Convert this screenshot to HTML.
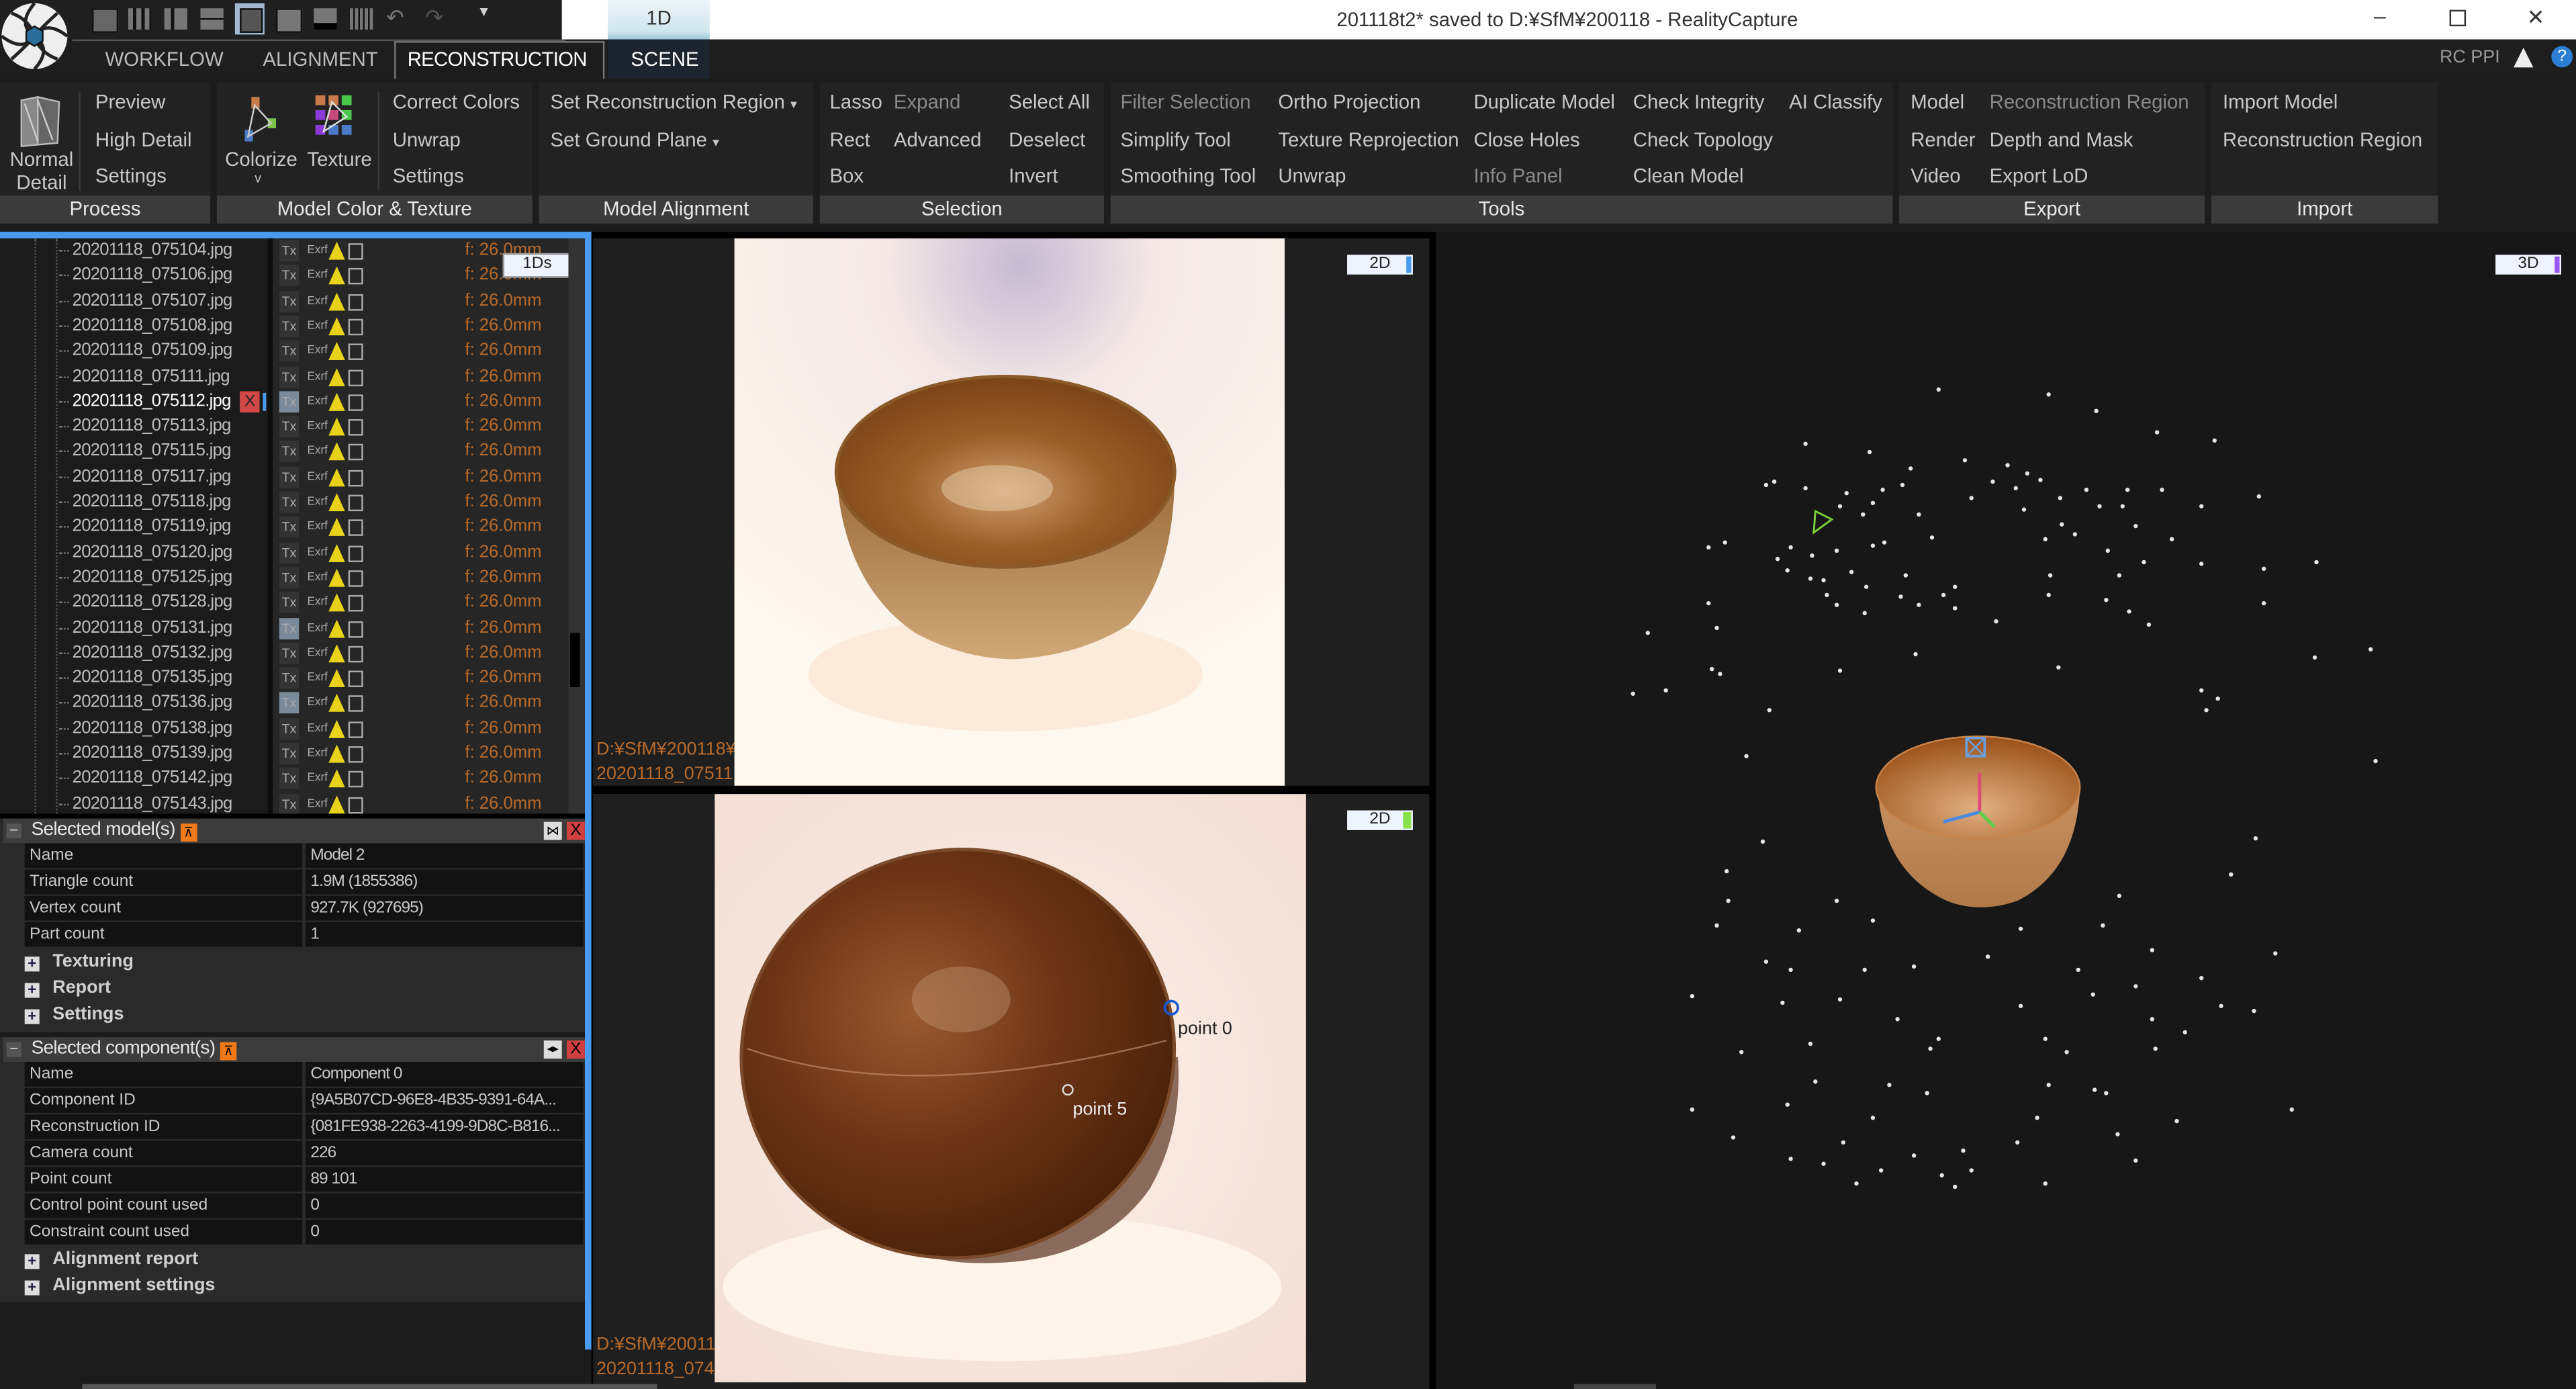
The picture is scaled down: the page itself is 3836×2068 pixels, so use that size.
<!DOCTYPE html>
<html><head><meta charset="utf-8">
<style>
html,body{margin:0;padding:0;background:#161616;overflow:hidden;width:3836px;height:2068px}
#s{position:absolute;left:0;top:0;width:1568px;height:845px;transform:scale(2.44643,2.44734);transform-origin:0 0;background:#1a1a1a;font-family:"Liberation Sans Narrow","Liberation Sans",sans-serif;font-size:12px;color:#c8c8c8}
.a{position:absolute;white-space:nowrap}
.g{position:absolute;top:50px;height:86px;background:#222}
.gl{position:absolute;left:0;right:0;bottom:0;height:17px;background:#3b3b3b;color:#e8e8e8;text-align:center;line-height:17px;font-size:12px}
.rb{position:absolute;font-size:12px;color:#c8c8c8;white-space:nowrap}
.dim{color:#8a8a8a}
.row{position:absolute;left:0;width:345px;height:15px;font-size:10.5px;line-height:15px;letter-spacing:-0.3px}
.row .n{position:absolute;left:44px;color:#bdbdbd}
.row .d{position:absolute;left:36px;top:7px;width:6px;border-top:1px dotted #777}
.row .tx{position:absolute;left:170px;top:1px;width:12px;height:13px;background:#333;color:#aaa;font-size:8px;line-height:13px;text-align:center;letter-spacing:0}
.row .ex{position:absolute;left:187px;color:#aaa;font-size:7px;letter-spacing:0}
.row .wr{position:absolute;left:200px;top:2px;width:0;height:0;border-left:5px solid transparent;border-right:5px solid transparent;border-bottom:11px solid #e8d21a}
.row .lb{position:absolute;left:212px;top:3px;width:7px;height:8px;border:1px solid #aaa}
.row .f{position:absolute;left:283px;color:#b86a2a;letter-spacing:0}
.pr{position:absolute;left:15px;width:340px;height:15px;font-size:10px;line-height:15px}
.pr .k{position:absolute;left:0;width:169px;height:15px;background:#121212;padding-left:3px;box-sizing:border-box;color:#c8c8c8}
.pr .v{position:absolute;left:171px;width:169px;height:15px;background:#121212;padding-left:3px;box-sizing:border-box;color:#c8c8c8;overflow:hidden;letter-spacing:-0.4px}
.ex2{position:absolute;left:15px;font-size:11px;font-weight:bold;color:#d0d0d0}
.ex2 i{display:inline-block;width:9px;height:9px;background:#ddd;color:#224;font-style:normal;font-size:9px;line-height:9px;text-align:center;margin-right:8px;vertical-align:-1px}
.hd{position:absolute;left:2px;width:354px;height:15px;background:#3c3c3c;font-size:12px;line-height:15px;color:#e6e6e6}
.pin{display:inline-block;width:10px;height:11px;background:#f07a1a;color:#000;font-size:8px;text-align:center;line-height:11px;vertical-align:-1px;margin-left:3px}
.tag{position:absolute;width:40px;height:12px;background:#eef4ff;color:#222;font-size:10px;line-height:12px;text-align:center;font-family:"Liberation Sans",sans-serif}
</style></head><body><div id="s">

<!-- title bar -->
<div class="a" style="left:0;top:0;width:342px;height:24px;background:#1f1f1f"></div>
<div class="a" style="left:342px;top:0;width:1226px;height:24px;background:#fff"></div>
<div class="a" style="left:370px;top:0;width:62px;height:24px;background:linear-gradient(#eef5f8,#cfe6ee 80%,#9cc9d6);color:#333;text-align:center;line-height:22px;font-size:12px">1D</div>
<div class="a" style="left:0;top:0;width:1568px;line-height:24px;text-align:center;color:#333;font-size:12px;padding-left:340px;box-sizing:border-box;font-family:'Liberation Sans',sans-serif">201118t2* saved to D:¥SfM¥200118 - RealityCapture</div>
<div class="a" style="left:1445px;top:2px;color:#333;font-size:13px">–</div>
<div class="a" style="left:1491px;top:6px;width:8px;height:8px;border:1px solid #333"></div>
<div class="a" style="left:1538px;top:3px;color:#333;font-size:13px">✕</div>
<div class="a" style="left:56px;top:5px;width:14px;height:13px;background:#666;border:1px solid #111"></div>
<div class="a" style="left:78px;top:5px;width:14px;height:13px;background:repeating-linear-gradient(90deg,#777 0 3px,#111 3px 5px)"></div>
<div class="a" style="left:100px;top:5px;width:14px;height:13px;background:linear-gradient(90deg,#777 0 4px,#111 4px 6px,#777 6px)"></div>
<div class="a" style="left:122px;top:5px;width:14px;height:13px;background:linear-gradient(#777 0 6px,#111 6px 7px,#777 7px)"></div>
<div class="a" style="left:143px;top:2px;width:18px;height:19px;background:#9fb8d0"></div>
<div class="a" style="left:146px;top:5px;width:12px;height:13px;background:#555;border:1px solid #111"></div>
<div class="a" style="left:168px;top:5px;width:14px;height:13px;background:#777;border:1px solid #111"></div>
<div class="a" style="left:191px;top:5px;width:14px;height:13px;background:#777;border-bottom:4px solid #000;box-sizing:border-box"></div>
<div class="a" style="left:213px;top:5px;width:14px;height:13px;background:repeating-linear-gradient(90deg,#777 0 2px,#111 2px 3px)"></div>
<div class="a" style="left:235px;top:3px;color:#777;font-size:13px">↶</div>
<div class="a" style="left:259px;top:3px;color:#555;font-size:13px">↷</div>
<div class="a" style="left:292px;top:2px;color:#ccc;font-size:10px">▾</div>
<svg class="a" style="left:0;top:0" width="44" height="46" viewBox="0 0 44 46">
<circle cx="21" cy="22" r="20" fill="#eee"/>
<path d="M21 2 Q10 15 21 22 M41 22 Q28 12 21 22 M21 42 Q32 30 21 22 M1 22 Q14 32 21 22 M7 8 Q18 12 21 22 M35 8 Q26 16 21 22 M35 36 Q24 32 21 22 M7 36 Q16 28 21 22" stroke="#222" stroke-width="2" fill="none"/>
<path d="M16 19 L21 16 L26 19 L26 25 L21 28 L16 25 Z" fill="#2a6f9a" stroke="#111"/>
</svg>

<!-- tabs row -->
<div class="a" style="left:0;top:24px;width:1568px;height:24px;background:#1e1e1e"></div>
<div class="a" style="left:44px;top:24px;width:300px;height:1px;background:#555"></div>
<div class="a" style="left:0;top:0;width:44px;height:46px;overflow:hidden"></div>
<svg class="a" style="left:0;top:0" width="44" height="46" viewBox="0 0 44 46">
<circle cx="21" cy="22" r="20" fill="#eee"/>
<path d="M21 2 Q10 15 21 22 M41 22 Q28 12 21 22 M21 42 Q32 30 21 22 M1 22 Q14 32 21 22 M7 8 Q18 12 21 22 M35 8 Q26 16 21 22 M35 36 Q24 32 21 22 M7 36 Q16 28 21 22" stroke="#222" stroke-width="2" fill="none"/>
<path d="M16 19 L21 16 L26 19 L26 25 L21 28 L16 25 Z" fill="#2a6f9a" stroke="#111"/>
</svg>
<div class="a" style="left:64px;top:29px;color:#bbb;font-size:12px">WORKFLOW</div>
<div class="a" style="left:160px;top:29px;color:#bbb;font-size:12px">ALIGNMENT</div>
<div class="a" style="left:240px;top:25px;width:128px;height:23px;border:1px solid #777;border-bottom:none;box-sizing:border-box;background:#1c1c1c"></div>
<div class="a" style="left:248px;top:29px;color:#fff;font-size:12px;letter-spacing:-0.3px">RECONSTRUCTION</div>
<div class="a" style="left:370px;top:24px;width:62px;height:24px;background:#1c2430"></div>
<div class="a" style="left:384px;top:29px;color:#fff;font-size:12px">SCENE</div>
<div class="a" style="left:1485px;top:29px;color:#999;font-size:11px">RC PPI</div>
<div class="a" style="left:1530px;top:29px;width:0;height:0;border-left:6px solid transparent;border-right:6px solid transparent;border-bottom:12px solid #eee"></div>
<div class="a" style="left:1553px;top:28px;width:13px;height:13px;border-radius:50%;background:#2d7fd6;color:#fff;font-size:10px;text-align:center;line-height:13px">?</div>

<!-- ribbon -->
<div class="a" style="left:0;top:48px;width:1568px;height:93px;background:#1c1c1c"></div>
<div class="g" style="left:0;width:128px"><div class="gl">Process</div></div>
<div class="g" style="left:132px;width:192px"><div class="gl">Model Color &amp; Texture</div></div>
<div class="g" style="left:328px;width:167px"><div class="gl">Model Alignment</div></div>
<div class="g" style="left:499px;width:173px"><div class="gl">Selection</div></div>
<div class="g" style="left:676px;width:476px"><div class="gl">Tools</div></div>
<div class="g" style="left:1156px;width:186px"><div class="gl">Export</div></div>
<div class="g" style="left:1346px;width:138px"><div class="gl">Import</div></div>

<svg class="a" style="left:10px;top:56px" width="30" height="36"><path d="M3 5 L13 3 L13 32 L3 33 Z" fill="#888" stroke="#bbb"/><path d="M13 3 L26 6 L25 31 L13 32 Z" fill="#666" stroke="#bbb"/><path d="M5 7 L13 30 M13 5 L22 29" stroke="#ccc"/></svg>
<div class="rb" style="left:6px;top:90px;text-align:center;line-height:14px">Normal<br>Detail</div>
<div class="a" style="left:48px;top:56px;width:1px;height:60px;background:#3a3a3a"></div>
<div class="rb" style="left:58px;top:55px">Preview</div>
<div class="rb" style="left:58px;top:78px">High Detail</div>
<div class="rb" style="left:58px;top:100px">Settings</div>
<svg class="a" style="left:144px;top:56px" width="30" height="32"><rect x="9" y="3" width="5" height="7" fill="#c87a4a"/><rect x="19" y="16" width="5" height="6" fill="#7dc24a"/><rect x="5" y="23" width="5" height="7" fill="#4a7ac8"/><path d="M11 8 L21 19 L7 27 Z" fill="none" stroke="#ccc"/></svg>
<div class="rb" style="left:137px;top:90px">Colorize</div>
<div class="rb" style="left:155px;top:104px;font-size:8px">v</div>
<svg class="a" style="left:190px;top:56px" width="30" height="32"><rect x="2" y="2" width="6" height="6" fill="#c87a4a"/><rect x="10" y="2" width="6" height="6" fill="#c87a4a"/><rect x="18" y="2" width="6" height="6" fill="#4ac84a"/><rect x="2" y="11" width="6" height="6" fill="#8a3ad8"/><rect x="10" y="11" width="6" height="6" fill="#c84a7a"/><rect x="18" y="11" width="6" height="6" fill="#4ac84a"/><rect x="2" y="20" width="6" height="6" fill="#8a3ad8"/><rect x="10" y="20" width="6" height="6" fill="#4a7ac8"/><rect x="18" y="20" width="6" height="6" fill="#4a7ac8"/><path d="M12 6 L21 15 L7 24 Z" fill="none" stroke="#ddd"/></svg>
<div class="rb" style="left:187px;top:90px">Texture</div>
<div class="a" style="left:230px;top:56px;width:1px;height:60px;background:#3a3a3a"></div>
<div class="rb" style="left:239px;top:55px">Correct Colors</div>
<div class="rb" style="left:239px;top:78px">Unwrap</div>
<div class="rb" style="left:239px;top:100px">Settings</div>
<div class="rb" style="left:335px;top:55px">Set Reconstruction Region <span style="font-size:8px">▾</span></div>
<div class="rb" style="left:335px;top:78px">Set Ground Plane <span style="font-size:8px">▾</span></div>
<div class="rb" style="left:505px;top:55px">Lasso</div><div class="rb dim" style="left:544px;top:55px">Expand</div><div class="rb" style="left:614px;top:55px">Select All</div>
<div class="rb" style="left:505px;top:78px">Rect</div><div class="rb" style="left:544px;top:78px">Advanced</div><div class="rb" style="left:614px;top:78px">Deselect</div>
<div class="rb" style="left:505px;top:100px">Box</div><div class="rb" style="left:614px;top:100px">Invert</div>
<div class="rb dim" style="left:682px;top:55px">Filter Selection</div><div class="rb" style="left:778px;top:55px">Ortho Projection</div><div class="rb" style="left:897px;top:55px">Duplicate Model</div><div class="rb" style="left:994px;top:55px">Check Integrity</div><div class="rb" style="left:1089px;top:55px">AI Classify</div>
<div class="rb" style="left:682px;top:78px">Simplify Tool</div><div class="rb" style="left:778px;top:78px">Texture Reprojection</div><div class="rb" style="left:897px;top:78px">Close Holes</div><div class="rb" style="left:994px;top:78px">Check Topology</div>
<div class="rb" style="left:682px;top:100px">Smoothing Tool</div><div class="rb" style="left:778px;top:100px">Unwrap</div><div class="rb dim" style="left:897px;top:100px">Info Panel</div><div class="rb" style="left:994px;top:100px">Clean Model</div>
<div class="rb" style="left:1163px;top:55px">Model</div><div class="rb dim" style="left:1211px;top:55px">Reconstruction Region</div>
<div class="rb" style="left:1163px;top:78px">Render</div><div class="rb" style="left:1211px;top:78px">Depth and Mask</div>
<div class="rb" style="left:1163px;top:100px">Video</div><div class="rb" style="left:1211px;top:100px">Export LoD</div>
<div class="rb" style="left:1353px;top:55px">Import Model</div>
<div class="rb" style="left:1353px;top:78px">Reconstruction Region</div>

<!-- left panel -->
<div class="a" style="left:0;top:141px;width:360px;height:704px;background:#1b1b1b"></div>
<div class="a" style="left:0;top:141px;width:360px;height:4px;background:#4a9af0"></div>
<div class="a" style="left:356px;top:141px;width:4px;height:680px;background:#4a9af0"></div>
<div class="a" style="left:166px;top:145px;width:180px;height:350px;background:#262626"></div>
<div class="a" style="left:21px;top:145px;width:0;height:350px;border-left:1px dotted #555"></div>
<div class="a" style="left:34px;top:145px;width:0;height:350px;border-left:1px dotted #555"></div>
<div class="a" style="left:0;top:495px;width:356px;height:3px;background:#000"></div>

<div class="a" style="left:0;top:145px;width:346px;height:350px;overflow:hidden">
<div class="row" style="top:0px"><span class="d"></span><span class="n">20201118_075104.jpg</span><span class="tx">Tx</span><span class="ex">Exrf</span><span class="wr"></span><span class="lb"></span><span class="f">f: 26.0mm</span></div>
<div class="row" style="top:15.3px"><span class="d"></span><span class="n">20201118_075106.jpg</span><span class="tx">Tx</span><span class="ex">Exrf</span><span class="wr"></span><span class="lb"></span><span class="f">f: 26.0mm</span></div>
<div class="row" style="top:30.6px"><span class="d"></span><span class="n">20201118_075107.jpg</span><span class="tx">Tx</span><span class="ex">Exrf</span><span class="wr"></span><span class="lb"></span><span class="f">f: 26.0mm</span></div>
<div class="row" style="top:45.9px"><span class="d"></span><span class="n">20201118_075108.jpg</span><span class="tx">Tx</span><span class="ex">Exrf</span><span class="wr"></span><span class="lb"></span><span class="f">f: 26.0mm</span></div>
<div class="row" style="top:61.2px"><span class="d"></span><span class="n">20201118_075109.jpg</span><span class="tx">Tx</span><span class="ex">Exrf</span><span class="wr"></span><span class="lb"></span><span class="f">f: 26.0mm</span></div>
<div class="row" style="top:76.5px"><span class="d"></span><span class="n">20201118_075111.jpg</span><span class="tx">Tx</span><span class="ex">Exrf</span><span class="wr"></span><span class="lb"></span><span class="f">f: 26.0mm</span></div>
<div class="row" style="top:91.8px"><span class="d"></span><span class="n" style="color:#fff;width:102px;overflow:hidden">20201118_075112.jpg</span><span style="position:absolute;left:146px;top:1px;width:12px;height:13px;background:#d04848;color:#222;font-size:10px;text-align:center;line-height:13px">X</span><span style="position:absolute;left:160px;top:2px;width:2px;height:11px;background:#4a9af0"></span><span class="tx" style="background:#7a8a9a">Tx</span><span class="ex">Exrf</span><span class="wr"></span><span class="lb"></span><span class="f">f: 26.0mm</span></div>
<div class="row" style="top:107.1px"><span class="d"></span><span class="n">20201118_075113.jpg</span><span class="tx">Tx</span><span class="ex">Exrf</span><span class="wr"></span><span class="lb"></span><span class="f">f: 26.0mm</span></div>
<div class="row" style="top:122.4px"><span class="d"></span><span class="n">20201118_075115.jpg</span><span class="tx">Tx</span><span class="ex">Exrf</span><span class="wr"></span><span class="lb"></span><span class="f">f: 26.0mm</span></div>
<div class="row" style="top:137.7px"><span class="d"></span><span class="n">20201118_075117.jpg</span><span class="tx">Tx</span><span class="ex">Exrf</span><span class="wr"></span><span class="lb"></span><span class="f">f: 26.0mm</span></div>
<div class="row" style="top:153px"><span class="d"></span><span class="n">20201118_075118.jpg</span><span class="tx">Tx</span><span class="ex">Exrf</span><span class="wr"></span><span class="lb"></span><span class="f">f: 26.0mm</span></div>
<div class="row" style="top:168.3px"><span class="d"></span><span class="n">20201118_075119.jpg</span><span class="tx">Tx</span><span class="ex">Exrf</span><span class="wr"></span><span class="lb"></span><span class="f">f: 26.0mm</span></div>
<div class="row" style="top:183.6px"><span class="d"></span><span class="n">20201118_075120.jpg</span><span class="tx">Tx</span><span class="ex">Exrf</span><span class="wr"></span><span class="lb"></span><span class="f">f: 26.0mm</span></div>
<div class="row" style="top:198.9px"><span class="d"></span><span class="n">20201118_075125.jpg</span><span class="tx">Tx</span><span class="ex">Exrf</span><span class="wr"></span><span class="lb"></span><span class="f">f: 26.0mm</span></div>
<div class="row" style="top:214.2px"><span class="d"></span><span class="n">20201118_075128.jpg</span><span class="tx">Tx</span><span class="ex">Exrf</span><span class="wr"></span><span class="lb"></span><span class="f">f: 26.0mm</span></div>
<div class="row" style="top:229.5px"><span class="d"></span><span class="n">20201118_075131.jpg</span><span class="tx" style="background:#7a8a9a">Tx</span><span class="ex">Exrf</span><span class="wr"></span><span class="lb"></span><span class="f">f: 26.0mm</span></div>
<div class="row" style="top:244.8px"><span class="d"></span><span class="n">20201118_075132.jpg</span><span class="tx">Tx</span><span class="ex">Exrf</span><span class="wr"></span><span class="lb"></span><span class="f">f: 26.0mm</span></div>
<div class="row" style="top:260.1px"><span class="d"></span><span class="n">20201118_075135.jpg</span><span class="tx">Tx</span><span class="ex">Exrf</span><span class="wr"></span><span class="lb"></span><span class="f">f: 26.0mm</span></div>
<div class="row" style="top:275.4px"><span class="d"></span><span class="n">20201118_075136.jpg</span><span class="tx" style="background:#7a8a9a">Tx</span><span class="ex">Exrf</span><span class="wr"></span><span class="lb"></span><span class="f">f: 26.0mm</span></div>
<div class="row" style="top:290.7px"><span class="d"></span><span class="n">20201118_075138.jpg</span><span class="tx">Tx</span><span class="ex">Exrf</span><span class="wr"></span><span class="lb"></span><span class="f">f: 26.0mm</span></div>
<div class="row" style="top:306px"><span class="d"></span><span class="n">20201118_075139.jpg</span><span class="tx">Tx</span><span class="ex">Exrf</span><span class="wr"></span><span class="lb"></span><span class="f">f: 26.0mm</span></div>
<div class="row" style="top:321.3px"><span class="d"></span><span class="n">20201118_075142.jpg</span><span class="tx">Tx</span><span class="ex">Exrf</span><span class="wr"></span><span class="lb"></span><span class="f">f: 26.0mm</span></div>
<div class="row" style="top:336.6px"><span class="d"></span><span class="n">20201118_075143.jpg</span><span class="tx">Tx</span><span class="ex">Exrf</span><span class="wr"></span><span class="lb"></span><span class="f">f: 26.0mm</span></div>
</div>
<div class="tag" style="left:306px;top:154px;height:13px;border:1px solid #999">1Ds</div>
<div class="a" style="left:346px;top:145px;width:10px;height:350px;background:#333"></div>
<div class="a" style="left:347px;top:385px;width:6px;height:33px;background:#000"></div>
<div class="a" style="left:163px;top:145px;width:3px;height:350px;background:#0d0d0d"></div>

<!-- props -->
<div class="a" style="left:0;top:498px;width:356px;height:323px;background:#2a2a2a"></div>
<div class="hd" style="top:498px"><span style="position:absolute;left:2px;top:3px;width:9px;height:9px;background:#555;color:#ddd;font-size:9px;line-height:8px;text-align:center">−</span><span style="position:absolute;left:17px;font-size:11.5px;letter-spacing:-0.3px">Selected model(s)<span class="pin">⊼</span></span><span style="position:absolute;left:329px;top:2px;width:11px;height:11px;background:#ddd;color:#000;font-size:8px;text-align:center;line-height:11px">⋈</span><span style="position:absolute;left:343px;top:2px;width:11px;height:11px;background:#d04040;color:#000;font-size:10px;text-align:center;line-height:11px">X</span></div>
<div class="pr" style="top:513px"><div class="k">Name</div><div class="v">Model 2</div></div>
<div class="pr" style="top:529px"><div class="k">Triangle count</div><div class="v">1.9M (1855386)</div></div>
<div class="pr" style="top:545px"><div class="k">Vertex count</div><div class="v">927.7K (927695)</div></div>
<div class="pr" style="top:561px"><div class="k">Part count</div><div class="v">1</div></div>
<div class="ex2" style="top:579px"><i>+</i>Texturing</div>
<div class="ex2" style="top:595px"><i>+</i>Report</div>
<div class="ex2" style="top:611px"><i>+</i>Settings</div>
<div class="a" style="left:0;top:628px;width:356px;height:3px;background:#1a1a1a"></div>
<div class="hd" style="top:631px"><span style="position:absolute;left:2px;top:3px;width:9px;height:9px;background:#555;color:#ddd;font-size:9px;line-height:8px;text-align:center">−</span><span style="position:absolute;left:17px;font-size:11.5px;letter-spacing:-0.3px">Selected component(s)<span class="pin">⊼</span></span><span style="position:absolute;left:329px;top:2px;width:11px;height:11px;background:#ddd;color:#000;font-size:7px;text-align:center;line-height:11px">◂▸</span><span style="position:absolute;left:343px;top:2px;width:11px;height:11px;background:#d04040;color:#000;font-size:10px;text-align:center;line-height:11px">X</span></div>
<div class="pr" style="top:646px"><div class="k">Name</div><div class="v">Component 0</div></div>
<div class="pr" style="top:662px"><div class="k">Component ID</div><div class="v">{9A5B07CD-96E8-4B35-9391-64A...</div></div>
<div class="pr" style="top:678px"><div class="k">Reconstruction ID</div><div class="v">{081FE938-2263-4199-9D8C-B816...</div></div>
<div class="pr" style="top:694px"><div class="k">Camera count</div><div class="v">226</div></div>
<div class="pr" style="top:710px"><div class="k">Point count</div><div class="v">89 101</div></div>
<div class="pr" style="top:726px"><div class="k">Control point count used</div><div class="v">0</div></div>
<div class="pr" style="top:742px"><div class="k">Constraint count used</div><div class="v">0</div></div>
<div class="ex2" style="top:760px"><i>+</i>Alignment report</div>
<div class="ex2" style="top:776px"><i>+</i>Alignment settings</div>
<div class="a" style="left:0;top:792px;width:356px;height:53px;background:#1b1b1b"></div>

<!-- center views -->
<div class="a" style="left:360px;top:141px;width:514px;height:704px;background:#000"></div>
<div class="a" style="left:361px;top:145px;width:509px;height:333px;background:#1f1f1f"></div>
<div class="a" style="left:361px;top:483px;width:509px;height:362px;background:#1f1f1f"></div>
<svg class="a" style="left:447px;top:145px" width="335" height="333" viewBox="0 0 335 333">
<defs>
<radialGradient id="bg1" cx="0.52" cy="0.05" r="0.8"><stop offset="0" stop-color="#c6bad2"/><stop offset="0.3" stop-color="#f3e8e6"/><stop offset="1" stop-color="#fff8ee"/></radialGradient>
<radialGradient id="in1" cx="0.5" cy="0.6" r="0.6"><stop offset="0" stop-color="#d0a070"/><stop offset="0.5" stop-color="#9a5e28"/><stop offset="1" stop-color="#7a4416"/></radialGradient>
<linearGradient id="out1" x1="0" y1="0" x2="0" y2="1"><stop offset="0" stop-color="#9a6a38"/><stop offset="1" stop-color="#d0a878"/></linearGradient>
</defs>
<rect width="335" height="333" fill="url(#bg1)"/>
<ellipse cx="165" cy="265" rx="120" ry="35" fill="#fbe6d2" opacity="0.7"/>
<path d="M62 142 Q66 210 110 240 Q140 256 170 256 Q210 254 240 235 Q268 205 268 142 Z" fill="url(#out1)"/>
<ellipse cx="165" cy="142" rx="103" ry="58" fill="url(#in1)" stroke="#8a5a28" stroke-width="2"/>
<ellipse cx="160" cy="152" rx="34" ry="14" fill="#f0d8b8" opacity="0.45"/>
</svg>
<svg class="a" style="left:435px;top:483px" width="360" height="358" viewBox="0 0 360 358">
<defs>
<radialGradient id="in2" cx="0.42" cy="0.38" r="0.65"><stop offset="0" stop-color="#9a5a32"/><stop offset="0.5" stop-color="#6e3616"/><stop offset="1" stop-color="#4a200a"/></radialGradient>
<radialGradient id="bg2" cx="0.5" cy="0.5" r="0.8"><stop offset="0" stop-color="#fbefe6"/><stop offset="1" stop-color="#f2dcd2"/></radialGradient>
</defs>
<rect width="360" height="358" fill="url(#bg2)"/>
<ellipse cx="175" cy="300" rx="170" ry="45" fill="#fff4ea"/>
<path d="M30 190 Q60 275 150 285 Q230 290 265 240 Q285 205 282 160 Z" fill="#8a6a5a"/>
<ellipse cx="148" cy="158" rx="132" ry="124" transform="rotate(-10 148 158)" fill="url(#in2)" stroke="#7a4a2a" stroke-width="2"/>
<ellipse cx="150" cy="125" rx="30" ry="20" fill="#c49878" opacity="0.4"/>
<path d="M20 155 Q120 190 275 150" stroke="#c89a7a" stroke-width="1" fill="none" opacity="0.6"/>
<circle cx="278" cy="130" r="4" fill="none" stroke="#1a5ad0" stroke-width="1.5"/>
<circle cx="215" cy="180" r="3" fill="none" stroke="#ddd"/>
<text x="282" y="146" font-family="Liberation Sans" font-size="11" fill="#222">point 0</text>
<text x="218" y="195" font-family="Liberation Sans" font-size="11" fill="#eee">point 5</text>
</svg>
<div class="a" style="left:363px;top:449px;color:#b86a2a;font-size:11px;font-family:'Liberation Sans',sans-serif;width:84px;overflow:hidden;line-height:15px">D:¥SfM¥200118¥<br>20201118_07511</div>
<div class="a" style="left:363px;top:811px;color:#b86a2a;font-size:11px;font-family:'Liberation Sans',sans-serif;width:72px;overflow:hidden;line-height:15px">D:¥SfM¥20011<br>20201118_074</div>
<div class="tag" style="left:820px;top:155px">2D<span style="position:absolute;right:1px;top:1px;width:3px;height:10px;background:#4a9af0"></span></div>
<div class="tag" style="left:820px;top:493px">2D<span style="position:absolute;right:1px;top:1px;width:5px;height:10px;background:#8ae04a"></span></div>

<!-- 3D view -->
<div class="a" style="left:874px;top:141px;width:694px;height:704px;background:#171717"></div>
<div class="tag" style="left:1519px;top:155px">3D<span style="position:absolute;right:1px;top:1px;width:3px;height:10px;background:#9a5af0"></span></div>
<div class="a" style="left:958px;top:842px;width:50px;height:3px;background:#444"></div>
<div class="a" style="left:50px;top:842px;width:350px;height:3px;background:#555"></div>
<svg class="a" style="left:874px;top:141px" width="694" height="704" viewBox="874 141 694 704">
<defs>
<radialGradient id="b3" cx="0.5" cy="0.7" r="0.7"><stop offset="0" stop-color="#e0b080"/><stop offset="1" stop-color="#9a5018"/></radialGradient>
<linearGradient id="b3o" x1="0" y1="0" x2="0" y2="1"><stop offset="0" stop-color="#c89060"/><stop offset="1" stop-color="#b07a48"/></linearGradient>
</defs>
<path d="M1143 480 Q1146 530 1185 548 Q1205 556 1228 548 Q1264 530 1266 480 Z" fill="url(#b3o)"/>
<ellipse cx="1204" cy="479" rx="62" ry="31" fill="url(#b3)" stroke="#c8844a"/>
<path d="M1205 494 L1205 470" stroke="#e04a7a" stroke-width="2"/>
<path d="M1205 494 L1183 500" stroke="#4a8ae0" stroke-width="2"/>
<path d="M1205 494 L1214 503" stroke="#5ad04a" stroke-width="2"/>
<rect x="1197" y="449" width="11" height="11" fill="none" stroke="#6aa0e0" stroke-width="1.5"/>
<path d="M1197 449 L1208 460 M1208 449 L1197 460" stroke="#6aa0e0"/>
<path d="M1105 311 L1115 316 L1104 324 Z" fill="none" stroke="#7ad03a" stroke-width="1.2"/>
<g fill="#e6e6e6">
<circle cx="1180" cy="237" r="1.3"/><circle cx="1247" cy="240" r="1.3"/><circle cx="1276" cy="250" r="1.3"/><circle cx="1099" cy="270" r="1.3"/><circle cx="1313" cy="263" r="1.3"/><circle cx="1348" cy="268" r="1.3"/><circle cx="1196" cy="280" r="1.3"/><circle cx="1234" cy="288" r="1.3"/>
<circle cx="1138" cy="275" r="1.3"/><circle cx="1075" cy="295" r="1.3"/><circle cx="1080" cy="293" r="1.3"/><circle cx="1099" cy="297" r="1.3"/><circle cx="1124" cy="300" r="1.3"/><circle cx="1146" cy="298" r="1.3"/><circle cx="1158" cy="295" r="1.3"/><circle cx="1163" cy="285" r="1.3"/>
<circle cx="1213" cy="293" r="1.3"/><circle cx="1222" cy="283" r="1.3"/><circle cx="1227" cy="297" r="1.3"/><circle cx="1242" cy="292" r="1.3"/><circle cx="1254" cy="303" r="1.3"/><circle cx="1270" cy="298" r="1.3"/><circle cx="1278" cy="308" r="1.3"/><circle cx="1292" cy="308" r="1.3"/><circle cx="1295" cy="298" r="1.3"/><circle cx="1316" cy="298" r="1.3"/><circle cx="1340" cy="308" r="1.3"/><circle cx="1375" cy="302" r="1.3"/>
<circle cx="1120" cy="308" r="1.3"/><circle cx="1134" cy="313" r="1.3"/><circle cx="1140" cy="306" r="1.3"/><circle cx="1168" cy="313" r="1.3"/><circle cx="1200" cy="303" r="1.3"/><circle cx="1232" cy="310" r="1.3"/><circle cx="1255" cy="319" r="1.3"/><circle cx="1300" cy="320" r="1.3"/><circle cx="1322" cy="328" r="1.3"/>
<circle cx="1040" cy="333" r="1.3"/><circle cx="1050" cy="330" r="1.3"/><circle cx="1082" cy="340" r="1.3"/><circle cx="1090" cy="333" r="1.3"/><circle cx="1103" cy="338" r="1.3"/><circle cx="1118" cy="335" r="1.3"/><circle cx="1140" cy="332" r="1.3"/><circle cx="1147" cy="330" r="1.3"/><circle cx="1176" cy="327" r="1.3"/><circle cx="1245" cy="328" r="1.3"/><circle cx="1263" cy="325" r="1.3"/><circle cx="1283" cy="335" r="1.3"/><circle cx="1305" cy="342" r="1.3"/>
<circle cx="1040" cy="367" r="1.3"/><circle cx="1045" cy="382" r="1.3"/><circle cx="1088" cy="347" r="1.3"/><circle cx="1102" cy="352" r="1.3"/><circle cx="1110" cy="353" r="1.3"/><circle cx="1127" cy="348" r="1.3"/><circle cx="1136" cy="357" r="1.3"/><circle cx="1160" cy="350" r="1.3"/><circle cx="1190" cy="357" r="1.3"/><circle cx="1248" cy="350" r="1.3"/><circle cx="1290" cy="350" r="1.3"/><circle cx="1340" cy="343" r="1.3"/><circle cx="1378" cy="346" r="1.3"/><circle cx="1410" cy="342" r="1.3"/>
<circle cx="1003" cy="385" r="1.3"/><circle cx="1112" cy="362" r="1.3"/><circle cx="1118" cy="368" r="1.3"/><circle cx="1135" cy="373" r="1.3"/><circle cx="1157" cy="363" r="1.3"/><circle cx="1168" cy="368" r="1.3"/><circle cx="1183" cy="362" r="1.3"/><circle cx="1190" cy="370" r="1.3"/><circle cx="1215" cy="378" r="1.3"/><circle cx="1247" cy="362" r="1.3"/><circle cx="1282" cy="365" r="1.3"/><circle cx="1296" cy="372" r="1.3"/><circle cx="1308" cy="380" r="1.3"/><circle cx="1378" cy="367" r="1.3"/>
<circle cx="1042" cy="407" r="1.3"/><circle cx="1047" cy="410" r="1.3"/><circle cx="1120" cy="408" r="1.3"/><circle cx="1166" cy="398" r="1.3"/><circle cx="1253" cy="406" r="1.3"/><circle cx="1340" cy="420" r="1.3"/><circle cx="1409" cy="400" r="1.3"/><circle cx="1443" cy="395" r="1.3"/><circle cx="994" cy="422" r="1.3"/><circle cx="1014" cy="420" r="1.3"/><circle cx="1077" cy="432" r="1.3"/><circle cx="1350" cy="425" r="1.3"/><circle cx="1343" cy="432" r="1.3"/>
<circle cx="1063" cy="460" r="1.3"/><circle cx="1446" cy="463" r="1.3"/><circle cx="1073" cy="512" r="1.3"/><circle cx="1373" cy="510" r="1.3"/><circle cx="1051" cy="530" r="1.3"/><circle cx="1358" cy="532" r="1.3"/><circle cx="1052" cy="548" r="1.3"/><circle cx="1118" cy="548" r="1.3"/><circle cx="1290" cy="545" r="1.3"/>
<circle cx="1045" cy="563" r="1.3"/><circle cx="1095" cy="566" r="1.3"/><circle cx="1140" cy="560" r="1.3"/><circle cx="1230" cy="565" r="1.3"/><circle cx="1280" cy="563" r="1.3"/><circle cx="1310" cy="578" r="1.3"/><circle cx="1385" cy="580" r="1.3"/>
<circle cx="1075" cy="585" r="1.3"/><circle cx="1090" cy="590" r="1.3"/><circle cx="1135" cy="590" r="1.3"/><circle cx="1165" cy="588" r="1.3"/><circle cx="1210" cy="582" r="1.3"/><circle cx="1265" cy="590" r="1.3"/><circle cx="1300" cy="600" r="1.3"/><circle cx="1340" cy="595" r="1.3"/>
<circle cx="1030" cy="606" r="1.3"/><circle cx="1085" cy="610" r="1.3"/><circle cx="1120" cy="608" r="1.3"/><circle cx="1155" cy="620" r="1.3"/><circle cx="1230" cy="612" r="1.3"/><circle cx="1274" cy="605" r="1.3"/><circle cx="1310" cy="620" r="1.3"/><circle cx="1352" cy="612" r="1.3"/><circle cx="1372" cy="615" r="1.3"/>
<circle cx="1060" cy="640" r="1.3"/><circle cx="1102" cy="635" r="1.3"/><circle cx="1175" cy="638" r="1.3"/><circle cx="1180" cy="632" r="1.3"/><circle cx="1245" cy="632" r="1.3"/><circle cx="1258" cy="640" r="1.3"/><circle cx="1312" cy="638" r="1.3"/><circle cx="1330" cy="628" r="1.3"/>
<circle cx="1105" cy="658" r="1.3"/><circle cx="1150" cy="660" r="1.3"/><circle cx="1173" cy="665" r="1.3"/><circle cx="1247" cy="660" r="1.3"/><circle cx="1275" cy="663" r="1.3"/><circle cx="1282" cy="665" r="1.3"/>
<circle cx="1030" cy="675" r="1.3"/><circle cx="1088" cy="672" r="1.3"/><circle cx="1140" cy="680" r="1.3"/><circle cx="1240" cy="680" r="1.3"/><circle cx="1325" cy="682" r="1.3"/><circle cx="1395" cy="675" r="1.3"/>
<circle cx="1055" cy="692" r="1.3"/><circle cx="1122" cy="695" r="1.3"/><circle cx="1165" cy="703" r="1.3"/><circle cx="1195" cy="700" r="1.3"/><circle cx="1228" cy="695" r="1.3"/><circle cx="1289" cy="690" r="1.3"/><circle cx="1110" cy="708" r="1.3"/><circle cx="1145" cy="712" r="1.3"/><circle cx="1182" cy="715" r="1.3"/><circle cx="1200" cy="712" r="1.3"/><circle cx="1300" cy="706" r="1.3"/><circle cx="1245" cy="720" r="1.3"/><circle cx="1130" cy="720" r="1.3"/><circle cx="1190" cy="722" r="1.3"/><circle cx="1090" cy="705" r="1.3"/>
</g>
</svg>

</div></body></html>
